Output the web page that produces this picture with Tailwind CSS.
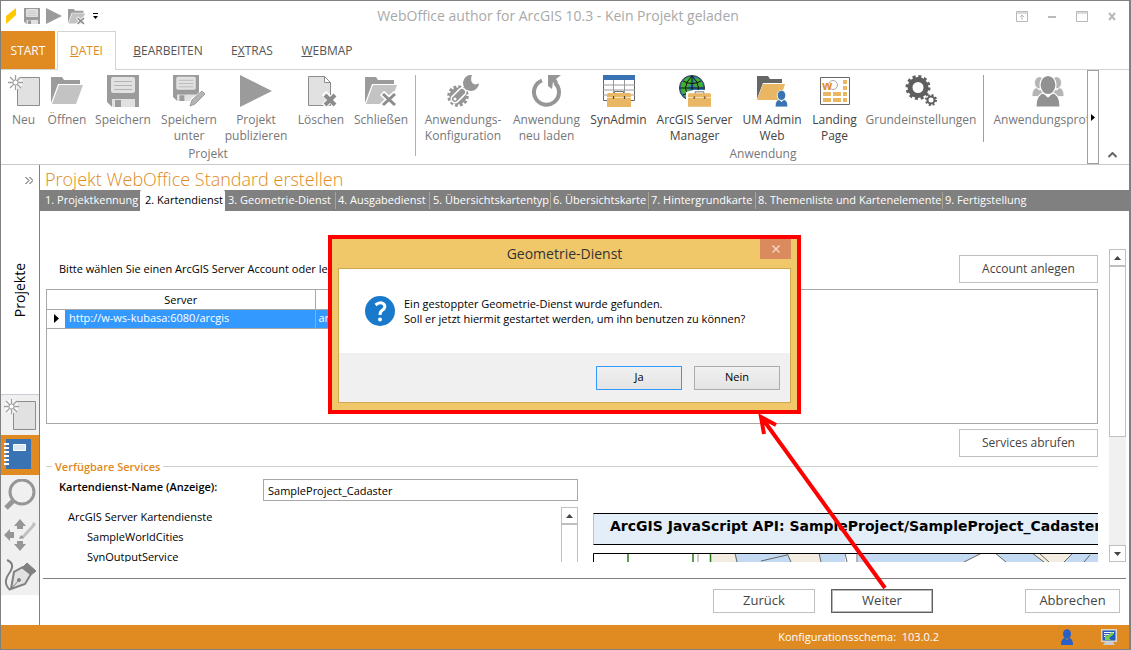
<!DOCTYPE html>
<html lang="de">
    <head>
        <meta charset="UTF-8">
        <meta name="viewport" content="width=device-width, initial-scale=1">
        <title>WebOffice author for ArcGIS 10.3</title>
        <script src="https://cdn.jsdelivr.net/npm/@tailwindcss/browser@4"></script>
    </head>
    <body class="relative h-screen flex flex-col overflow-hidden bg-white border border-r-2 border-[#808080] font-['Open_Sans','Noto_Sans',sans-serif] text-[11px] text-black">
        <!-- shared icons -->
        <svg class="hidden">
            <symbol id="i-new" viewBox="0 0 32 32">
                <path d="M9.500 2.500h22v28h-22z" fill="#e1e1e1" stroke="#8c8c8c"/>
                <circle cx="7.500" cy="7.500" r="7" fill="#fff" fill-opacity=".8"/>
                <path d="M7.500 0v15M0 7.500h15M2 2l11 11M13 2L2 13" stroke="#a0a0a0" stroke-width="1.300"/>
                <circle cx="7.500" cy="7.500" r="2.500" fill="#fff" stroke="#a0a0a0"/>
            </symbol>
            <symbol id="i-open" viewBox="0 0 32 32">
                <path d="M0 28V2h11l2 3h16v4H7z" fill="#9b9b9b"/>
                <path d="M8 10h24l-7 19H1z" fill="#c3c3c3"/>
            </symbol>
            <symbol id="i-save" viewBox="0 0 32 32">
                <path d="M0 0h32v32H5l-5-5z" fill="#9b9b9b"/>
                <rect x="4" y="2" width="24" height="16" rx="2" fill="#e1e1e1"/>
                <path d="M7 6.500h18M7 10.500h18M7 14.500h18" stroke="#b4b4b4"/>
                <path d="M5 24h23v8H5z" fill="#e1e1e1"/>
                <path d="M8 25h6v7H8z" fill="#9b9b9b"/>
            </symbol>
            <symbol id="i-play" viewBox="0 0 32 32">
                <path d="M0 0l32 16L0 32z" fill="#9b9b9b"/>
            </symbol>
            <symbol id="i-close" viewBox="0 0 32 32">
                <path d="M0 28V2h11l2 3h16v4H7z" fill="#9b9b9b"/>
                <path d="M8 10h24l-7 19H1z" fill="#c3c3c3"/>
                <path d="M17 18l14 13M31 18L17 31" stroke="#fff" stroke-width="6"/>
                <path d="M18 19l12 11M30 19L18 30" stroke="#8c8c8c" stroke-width="3"/>
            </symbol>
            <symbol id="i-user" viewBox="0 0 12 16">
                <path d="M0 16c0-5 2-7 4-7l2 2 2-2c2 0 4 2 4 7z"/>
                <ellipse cx="6" cy="5" rx="4" ry="4.800"/>
            </symbol>
            <symbol id="i-case" viewBox="0 0 24 16">
                <path d="M7.500 3V.500h9V3" fill="none" stroke="#707070"/>
                <path d="M1 2h22l1 1v13H0V3z" fill="#e9b664"/>
                <path d="M0 6.500h5M8 6.500h8M19 6.500h5" stroke="#fbe6c0"/>
                <path d="M6 5h1v3H6zM17 5h1v3h-1z" fill="#554830"/>
            </symbol>
        </svg>

        <!-- title bar -->
        <header class="flex h-[30px] shrink-0 items-center px-[5px]">
            <div class="flex w-[94px] items-center gap-[6px]">
                <svg class="size-4" viewBox="0 0 16 16"><path d="M0 8l10-8v7L0 16z" fill="#ffc800"/></svg>
                <button aria-label="Speichern" class="-ml-1 block"><svg class="size-4"><use href="#i-save"/></svg></button>
                <button aria-label="Publizieren" class="block"><svg class="size-4"><use href="#i-play"/></svg></button>
                <button aria-label="Schließen" class="block"><svg class="size-[17px]"><use href="#i-close"/></svg></button>
                <button aria-label="Mehr" class="ml-[2px] block"><svg class="h-[6px] w-[5px]" viewBox="0 0 5 6"><path d="M0 0h5v1H0zM0 3h5L2.500 6z"/></svg></button>
            </div>
            <h1 class="flex-1 text-center text-sm text-[#a9a9a9]">WebOffice author for ArcGIS 10.3 - Kein Projekt geladen</h1>
            <div class="flex items-center gap-[18px] pr-[6px]">
                <button aria-label="Menüband"><svg class="h-[11px] w-3" viewBox="0 0 12 11" fill="none" stroke="#b9b9b9"><path d="M.5.5h11v10H.5zM0 2h12M6 9V4M4 6l2-2 2 2"/></svg></button>
                <button aria-label="Minimieren"><svg class="h-[11px] w-3" viewBox="0 0 12 11"><path d="M2 5h8v2H2z" fill="#b9b9b9"/></svg></button>
                <button aria-label="Maximieren"><svg class="h-[11px] w-3" viewBox="0 0 12 11" fill="none" stroke="#b9b9b9"><path d="M.5.5h11v10H.5zM0 2h12"/></svg></button>
                <button aria-label="Fenster schließen"><svg class="h-[11px] w-3" viewBox="0 0 12 11"><path d="M3 2l6 7M9 2L3 9" stroke="#b9b9b9" stroke-width="2"/></svg></button>
            </div>
        </header>

        <!-- ribbon tabs -->
        <nav class="flex h-[39px] shrink-0 border-b border-[#d4d4d4] text-xs text-[#555]">
            <button class="w-[54px] bg-[#e08a22] pt-px text-white">START</button>
            <button class="-mb-px ml-[2px] w-[59px] border border-b-0 border-[#d4d4d4] bg-white text-[#e08a22]"><u>D</u>ATEI</button>
            <button class="ml-[2px] w-[100px] pt-px"><u>B</u>EARBEITEN</button>
            <button class="w-[68px] pt-px">E<u>X</u>TRAS</button>
            <button class="w-[82px] pt-px"><u>W</u>EBMAP</button>
        </nav>

        <!-- ribbon -->
        <div class="flex h-[95px] shrink-0 border-b border-[#c8c8c8] text-xs leading-4 text-[#777]">
            <div class="flex min-w-0 flex-1 overflow-hidden">
                <section class="flex w-[414px] shrink-0 flex-col justify-between">
                    <div class="flex items-start whitespace-nowrap pt-[5px] pl-px">
                        <button class="flex w-[43px] shrink-0 flex-col items-center gap-[5px]"><svg class="size-8"><use href="#i-new"/></svg>Neu</button>
                        <button class="flex w-[44px] shrink-0 flex-col items-center gap-[5px]"><svg class="size-8"><use href="#i-open"/></svg>Öffnen</button>
                        <button class="flex w-[68px] shrink-0 flex-col items-center gap-[5px]"><svg class="size-8"><use href="#i-save"/></svg>Speichern</button>
                        <button class="flex w-[64px] shrink-0 flex-col items-center gap-[5px]">
                            <svg class="size-8" viewBox="0 0 32 32"><use href="#i-save" width="26" height="26"/><path d="M15 32l3-8 11-9 4 4-11 11z" fill="#fff"/><path d="M17 31l2-6 10-9 3 3-10 10z" fill="#b4b4b4" stroke="#9b9b9b"/></svg>
                            <span>Speichern<br>unter</span>
                        </button>
                        <button class="flex w-[70px] shrink-0 flex-col items-center gap-[5px]"><svg class="size-8"><use href="#i-play"/></svg><span>Projekt<br>publizieren</span></button>
                        <button class="flex w-[60px] shrink-0 flex-col items-center gap-[5px]">
                            <svg class="size-8" viewBox="0 0 32 32"><path d="M3.500 1.500h16l6 6v23h-22z" fill="#e1e1e1" stroke="#8c8c8c"/><path d="M19.500 1.500v6h6z" fill="#fff" stroke="#8c8c8c"/><path d="M19 18l13 13M32 18L19 31" stroke="#fff" stroke-width="6"/><path d="M20 20l10 10M30 20L20 30" stroke="#8c8c8c" stroke-width="4"/></svg>
                            Löschen
                        </button>
                        <button class="flex w-[60px] shrink-0 flex-col items-center gap-[5px]"><svg class="size-8"><use href="#i-close"/></svg>Schließen</button>
                    </div>
                    <h2 class="pb-[2px] text-center">Projekt</h2>
                </section>
                <section class="flex w-[696px] shrink-0 flex-col justify-between">
                    <div class="flex items-start whitespace-nowrap pt-[5px]">
                        <div class="-mb-4 h-[81px] w-[6px] shrink-0 border-l border-[#a5b3c8]"></div>
                        <button class="flex w-[84px] flex-col items-center gap-[5px]">
                            <svg class="size-8" viewBox="0 0 32 32"><circle cx="11" cy="21" r="8.500" fill="#969696"/><circle cx="11" cy="21" r="9" fill="none" stroke="#969696" stroke-width="3.500" stroke-dasharray="2.830 1.880"/><path d="M14 18l9-9" stroke="#969696" stroke-width="3"/><path d="M8 24l7-7" stroke="#fff" stroke-width="9" stroke-linecap="round"/><path d="M8 24l7-7" stroke="#969696" stroke-width="6" stroke-linecap="round"/><circle cx="8" cy="24" r="1.500" fill="#fff"/><path d="M25 0a8 8 0 1 0 7 8c-5 4-10-1-7-8z" fill="#969696"/></svg>
                            <span>Anwendungs-<br>Konfiguration</span>
                        </button>
                        <button class="flex w-[83px] flex-col items-center gap-[5px]">
                            <svg class="size-8" viewBox="0 0 32 32"><path d="M24 8a12.500 12.500 0 1 1-13-2.500" fill="none" stroke="#969696" stroke-width="4"/><path d="M17 0h13l-5 4 2 3-3 3-2-3-1 7-4-3z" fill="#969696"/></svg>
                            <span>Anwendung<br>neu laden</span>
                        </button>
                        <button class="flex w-[61px] flex-col items-center gap-[5px] text-[#444]">
                            <svg class="size-8" viewBox="0 0 32 32"><path d="M.5 4.500h31v21H.5z" fill="#fff" stroke="#666"/><path d="M0 0h32v5H0z" fill="#3973b4"/><path d="M0 10h32M0 15h32M0 20h32M10.500 5v20M21.500 5v20" stroke="#999"/><use href="#i-case" x="4" y="16" width="24" height="16"/></svg>
                            SynAdmin
                        </button>
                        <button class="flex w-[91px] flex-col items-center gap-[5px] text-[#444]">
                            <svg class="size-8" viewBox="0 0 32 32"><circle cx="13" cy="13" r="12.500" fill="#2d7fc4" stroke="#333"/><path d="M3 8c3-6 9-7 11-5l-1 6-4 3 2 6-4 4c-4-3-6-8-4-14zM16 3c5 0 8 5 8 8l-6 3-3-4z" fill="#44b030"/><path d="M13 1v24M1 13h24M4 6q9 5 18 0M4 20q9-5 18 0M13 1q-13 12 0 24M13 1q13 12 0 24" fill="none" stroke="#111"/><path d="M7 17l7-2h12l6 2v15H7z" fill="#fff"/><use href="#i-case" x="9" y="16" width="23" height="16"/></svg>
                            <span>ArcGIS Server<br>Manager</span>
                        </button>
                        <button class="flex w-[64px] flex-col items-center gap-[5px] text-[#444]">
                            <svg class="size-8" viewBox="0 0 32 32"><path d="M1 24V1h11l2 3h12v4H7z" fill="#666"/><path d="M7 9h22l-5 16H1z" fill="#e9b664"/><use href="#i-user" x="19" y="15" width="13" height="17" fill="#3973b4" stroke="#fff" stroke-width=".8"/></svg>
                            <span>UM Admin<br>Web</span>
                        </button>
                        <button class="flex w-[61px] flex-col items-center gap-[5px] text-[#444]">
                            <svg class="size-8" viewBox="0 0 32 32"><path d="M1.500 2.500h29v27h-29z" fill="#fff" stroke="#666"/><circle cx="14" cy="10" r="4.500" fill="none" stroke="#aaa"/><text x="3" y="15" font-size="12" font-weight="700" fill="#e09030">w</text><path d="M24 5h4v4h-4zM24 11h4v4h-4zM4 17h8v4H4zM14 17h8v4h-8zM24 17h4v4h-4zM4 23h8v4H4zM14 23h8v4h-8zM24 23h4v4h-4z" fill="#e9b664"/></svg>
                            <span>Landing<br>Page</span>
                        </button>
                        <button class="flex w-[112px] flex-col items-center gap-[5px]">
                            <svg class="size-8" viewBox="0 0 32 32" fill="none" stroke="#5f5f5f"><circle cx="13" cy="12.500" r="8" stroke-width="5"/><circle cx="13" cy="12.500" r="11" stroke-width="3" stroke-dasharray="3 2.760"/><circle cx="26" cy="25" r="3.500" stroke-width="2"/><circle cx="26" cy="25" r="5" stroke-width="2" stroke-dasharray="2 1.930"/></svg>
                            Grundeinstellungen
                        </button>
                        <div class="ml-[6px] h-[67px] w-[6px] shrink-0 border-l border-[#a0a0a0]"></div>
                        <button class="flex w-[118px] flex-col items-center gap-[5px]">
                            <svg class="size-8" viewBox="0 0 32 32" stroke="#fff" stroke-width=".6"><g fill="#b4b4b4"><use href="#i-user" x="0" y="1" width="15" height="21"/><use href="#i-user" x="17" y="1" width="15" height="21"/></g><use href="#i-user" x="4" y="0" width="24" height="32" fill="#919191"/></svg>
                            Anwendungsprofile
                        </button>
                    </div>
                    <h2 class="pb-[2px] text-center">Anwendung</h2>
                </section>
            </div>
            <button aria-label="Weiter blättern" class="flex w-3 shrink-0 justify-center border border-[#a0a0a0] pt-[43px]"><svg class="h-[7px] w-1" viewBox="0 0 4 7"><path d="M0 0l4 3.500L0 7z"/></svg></button>
            <button aria-label="Menüband reduzieren" class="flex w-[30px] shrink-0 items-end justify-center pr-1 pb-[6px]"><svg class="h-[6px] w-[9px]" viewBox="0 0 9 6"><path d="M.5 5L4.500 1l4 4" fill="none" stroke="#666" stroke-width="2"/></svg></button>
        </div>

        <div class="flex min-h-0 flex-1">
            <!-- left panel -->
            <aside class="flex w-[39px] shrink-0 flex-col items-center border-r border-[#808080] pb-[30px]">
                <button aria-label="Aufklappen" class="mt-3 mr-[6px] self-end"><svg class="h-[7px] w-2" viewBox="0 0 8 7"><path d="M.5 0L4 3.500.5 7M4.500 0L8 3.500 4.500 7" fill="none" stroke="#444"/></svg></button>
                <span class="mt-[79px] rotate-180 text-sm leading-5 [writing-mode:vertical-rl]">Projekte</span>
                <div class="mt-auto flex w-full flex-col border-t border-[#ccccd8] bg-[#f0f0f0]">
                    <button aria-label="Neu" class="flex h-10 items-center justify-center"><svg class="size-8"><use href="#i-new"/></svg></button>
                    <button aria-label="Projekt" class="flex h-10 items-center justify-center bg-[#e08a22]">
                        <svg class="size-8" viewBox="0 0 32 32"><path d="M2 0h25v30H2z" fill="#3973b4"/><path d="M9.500 5.500h12v6h-12z" fill="#dce6f0" stroke="#fff"/><path d="M2.500 4v23" stroke="#fff" stroke-width="5" stroke-dasharray="2 2"/></svg>
                    </button>
                    <button aria-label="Suchen" class="flex h-10 items-center justify-center">
                        <svg class="size-8" viewBox="0 0 32 32" fill="none" stroke="#969696"><circle cx="18" cy="13" r="12" stroke-width="3"/><path d="M9 22l-7 7" stroke-width="5"/></svg>
                    </button>
                    <button aria-label="Bearbeiten" class="flex h-10 items-center justify-center">
                        <svg class="size-8" viewBox="0 0 32 32" fill="#969696"><path d="M16 0l6 7h-3v3h-6V7h-3zM16 32l6-7h-3v-3h-6v3h-3zM0 16l6-6v3h4v6H6v3z"/><path d="M17 18l11-12 1-3 3 2-2 3-11 12z" fill="#c0c0c0"/><path d="M15 20l2-4 3 3z"/></svg>
                    </button>
                    <button aria-label="Zeichnen" class="flex h-10 items-center justify-center">
                        <svg class="size-8" viewBox="0 0 32 32" fill="none" stroke="#808080"><path d="M3 1c5 2 7 6 3 12-5 7-6 12 0 18" stroke-width="2"/><path d="M7 30l3-17 9-5 8 7-6 10z" fill="#e1e1e1" stroke-width="2"/><path d="M7 30l8-9"/><circle cx="15" cy="21" r="1.500" fill="#808080"/><path d="M23 4l9 8-5 4-9-7z" fill="#808080"/></svg>
                    </button>
                </div>
            </aside>

            <main class="flex min-w-0 flex-1 flex-col">
                <h2 class="h-[25px] shrink-0 pl-[5px] text-lg leading-[28px] font-light text-[#e08a22]">Projekt WebOffice Standard erstellen</h2>
                <ol class="flex h-[21px] shrink-0 items-center whitespace-nowrap bg-[#808080] text-white">
                    <li class="w-[100px] pl-[5px]">1. Projektkennung</li>
                    <li class="flex h-full w-[85px] items-center rounded-t-xs bg-white pl-[5px] text-black">2. Kartendienst</li>
                    <li class="w-[110px] pl-[3px]">3. Geometrie-Dienst</li>
                    <li class="w-[94px] border-l border-[#a8a490] pl-[2px]">4. Ausgabedienst</li>
                    <li class="w-[121px] border-l border-[#a8a490] pl-[3px]">5. Übersichtskartentyp</li>
                    <li class="w-[98px] border-l border-[#a8a490] pl-[2px]">6. Übersichtskarte</li>
                    <li class="w-[107px] border-l border-[#a8a490] pl-[2px]">7. Hintergrundkarte</li>
                    <li class="w-[187px] border-l border-[#a8a490] pl-[2px]">8. Themenliste und Kartenelemente</li>
                    <li class="border-l border-[#a8a490] pl-[2px]">9. Fertigstellung</li>
                </ol>

                <div class="flex min-h-0 flex-1 overflow-hidden">
                    <div class="flex min-w-0 flex-1 flex-col pl-[6px] pr-[11px]">
                        <div class="mt-11 flex shrink-0 items-center justify-between pl-[13px]">
                            <p>Bitte wählen Sie einen ArcGIS Server Account oder legen Sie einen neuen an.</p>
                            <button class="h-7 w-[139px] border border-[#c0c0c0] text-xs text-[#444]">Account anlegen</button>
                        </div>
                        <div class="mt-[6px] h-[135px] shrink-0 border border-[#a8a8a8]">
                            <table class="w-[540px] table-fixed border-collapse">
                                <colgroup><col class="w-[18px]"><col class="w-[250px]"><col></colgroup>
                                <thead>
                                    <tr class="h-[18px] border-b border-[#a8a8a8]">
                                        <th colspan="2" class="border-r border-[#a8a8a8] p-0 pt-[2px] font-normal">Server</th>
                                        <th class="p-0 font-normal"></th>
                                    </tr>
                                </thead>
                                <tbody>
                                    <tr class="h-[19px] border-b border-[#a8a8a8] bg-[#3399ff] text-white">
                                        <td class="bg-white p-0"><svg class="mx-auto h-[9px] w-[5px]" viewBox="0 0 5 9"><path d="M0 0l5 4.500L0 9z"/></svg></td>
                                        <td class="border-r border-[#a8a8a8] p-0 pl-1">http://w-ws-kubasa:6080/arcgis</td>
                                        <td class="p-0 pl-[3px]">arcgis</td>
                                    </tr>
                                </tbody>
                            </table>
                        </div>
                        <div class="mt-[5px] flex shrink-0 justify-end">
                            <button class="h-7 w-[139px] border border-[#c0c0c0] text-xs text-[#444]">Services abrufen</button>
                        </div>
                        <fieldset class="min-w-0 border-t border-[#d0d0d0]">
                            <legend class="ml-[6px] px-[3px] leading-[19px] font-semibold text-[#e08a22]">Verfügbare Services</legend>
                            <div class="flex gap-[15px]">
                                <div class="w-[532px] shrink-0 pl-[13px]">
                                    <div class="flex items-start pt-[3px]">
                                        <label for="dienst" class="w-[204px] leading-[15px] font-semibold">Kartendienst-Name (Anzeige):</label>
                                        <input id="dienst" value="SampleProject_Cadaster" class="h-[22px] min-w-0 flex-1 border border-[#a8a8a8] px-1 outline-none">
                                    </div>
                                    <div class="mt-[6px] flex h-[55px] justify-between overflow-hidden leading-5">
                                        <ul class="pl-[9px]">
                                            <li>ArcGIS Server Kartendienste
                                                <ul class="pl-[19px]">
                                                    <li>SampleWorldCities</li>
                                                    <li>SynOutputService</li>
                                                </ul>
                                            </li>
                                        </ul>
                                        <div class="w-[17px] border-x border-t border-[#c0c0c0]">
                                            <button aria-label="Nach oben" class="flex h-[17px] w-full items-center justify-center border-b-2 border-[#c0c0c0]"><svg class="h-1 w-[7px]" viewBox="0 0 7 4"><path d="M0 4l3.500-4L7 4z" fill="#444"/></svg></button>
                                        </div>
                                    </div>
                                </div>
                                <div class="mt-[37px] h-[49px] min-w-0 flex-1 overflow-hidden">
                                    <div class="flex h-8 items-center overflow-hidden border-y border-l border-y-black border-l-[#c0c0c0] bg-[#e4eef8] pl-4">
                                        <h3 class="whitespace-nowrap pb-[6px] font-['DejaVu_Sans',sans-serif] text-sm font-bold">ArcGIS JavaScript API: SampleProject/SampleProject_Cadaster</h3>
                                    </div>
                                    <svg class="mt-2 h-[9px] w-full" viewBox="0 0 505 9" preserveAspectRatio="xMinYMin slice">
                                        <path d="M117 0h388v9H117z" fill="#f2ede0"/>
                                        <path d="M142 0h52l4 9h-55zM226 0h26l2 9h-26zM265 0h124l-18 9H265zM402 0h37l12 9h-38zM480 0h25v9h-34z" fill="#c4daf2"/>
                                        <path d="M252 0h13v9h-13zM389 0h13l11 9h-42z" fill="#fff"/>
                                        <path d="M142 0l2 9M194 0l4 9M226 0l2 9M252 0l2 9M264 0v9M389 0l-18 9M402 0l11 9M439 0l12 9M480 0l-9 9M168 8l26-6M446 0l10 9M497 2l-6 7" fill="none" stroke="#666"/>
                                        <path d="M35 0v9M100 0v9M117.500 0v9" stroke="#287818" stroke-width="1.500"/>
                                        <path d="M105 0v9" stroke="#999"/>
                                        <path d="M.5 9V.5H505" fill="none" stroke="#000"/>
                                    </svg>
                                </div>
                            </div>
                        </fieldset>
                    </div>
                    <div class="mr-[3px] mt-[38px] flex w-[17px] shrink-0 flex-col bg-[#f0f0f0]">
                        <button aria-label="Nach oben" class="flex h-[17px] shrink-0 items-center justify-center border border-[#c0c0c0] bg-white"><svg class="h-1 w-[7px]" viewBox="0 0 7 4"><path d="M0 4l3.500-4L7 4z" fill="#444"/></svg></button>
                        <div class="h-[171px] border border-[#c0c0c0] bg-white"></div>
                        <button aria-label="Nach unten" class="mt-auto flex h-[17px] shrink-0 items-center justify-center border border-[#c0c0c0] bg-white"><svg class="h-1 w-[7px]" viewBox="0 0 7 4"><path d="M0 0l3.500 4L7 0z" fill="#444"/></svg></button>
                    </div>
                </div>

                <footer class="mx-[3px] mt-4 flex h-[47px] shrink-0 border-t border-[#808080] pr-[6px] pt-[10px] text-[13px] text-[#444]">
                    <button class="ml-auto h-6 w-[102px] border border-[#c0c0c0]">Zurück</button>
                    <button class="ml-4 h-6 w-[102px] border border-[#606060] inset-ring inset-ring-[#b8b8b8]">Weiter</button>
                    <button class="ml-[92px] h-6 w-[95px] border border-[#c0c0c0]">Abbrechen</button>
                </footer>
            </main>
        </div>

        <!-- status bar -->
        <div class="flex h-6 shrink-0 items-center justify-end bg-[#e08a22] pr-3 text-white">
            <span class="mr-[122px] whitespace-pre">Konfigurationsschema:  103.0.2</span>
            <svg class="mr-[28px] h-4 w-3" fill="#2860c8"><use href="#i-user"/></svg>
            <svg class="size-4" viewBox="0 0 16 16"><path d="M0 0h16v13H0z" fill="#d8d8c8"/><path d="M1.500 1.500h13v10h-13z" fill="#2858c0"/><path d="M3 3.500h10M3 5.500h5M3 7.500h3" stroke="#fff"/><path d="M4 11V5l2 2 5-4 2 2-5 4 2 2z" fill="#70d050"/><path d="M4 13h8l2 3H2z" fill="#ccc"/></svg>
        </div>

        <!-- message box -->
        <div class="absolute inset-0 flex items-center justify-center pr-px pb-px">
            <div role="dialog" aria-labelledby="dlg-title" class="relative w-[473px] border-4 border-[#ff0000] bg-[#f0c869] px-[6px] pb-[7px]">
                <div class="relative flex h-[29px] items-center justify-center">
                    <h2 id="dlg-title" class="text-sm text-[#333]">Geometrie-Dienst</h2>
                    <button aria-label="Schließen" class="absolute right-0 top-0 flex h-5 w-[31px] items-center justify-center bg-[#db8a5e]"><svg class="size-2" viewBox="0 0 8 8"><path d="M.5.5l7 7M7.500.5l-7 7" stroke="#f4dcc8" stroke-width="1.300"/></svg></button>
                </div>
                <div class="border border-[#d0a850]">
                    <div class="flex h-[84px] items-center gap-[9px] bg-white pl-[26px]">
                        <svg class="size-[30px]" viewBox="0 0 30 30"><circle cx="15" cy="15" r="15" fill="#1979ca"/><path d="M10.500 9q4-3.500 7.500-1.500c3 2 2 5-.5 6.500-2 1.300-2.500 2-2.500 5" fill="none" stroke="#fff" stroke-width="3"/><circle cx="15" cy="23.500" r="2" fill="#fff"/></svg>
                        <p class="leading-[15px]">Ein gestoppter Geometrie-Dienst wurde gefunden.<br>Soll er jetzt hiermit gestartet werden, um ihn benutzen zu können?</p>
                    </div>
                    <div class="flex h-[49px] items-center justify-end gap-3 bg-[#f0f0f0] pr-[10px]">
                        <button class="h-6 w-[86px] border border-[#3399ff] bg-linear-to-b from-[#f0f0f0] to-[#e4e4e4]">Ja</button>
                        <button class="h-6 w-[86px] border border-[#acacac] bg-linear-to-b from-[#f0f0f0] to-[#e4e4e4]">Nein</button>
                    </div>
                </div>
                <!-- pointer from the Weiter button -->
                <svg class="pointer-events-none absolute left-[425px] top-full h-[180px] w-[134px]" viewBox="0 0 134 180" fill="none" stroke="#ff0000" stroke-width="4"><path d="M128 178L5 8M7 24L4 7l15 8"/></svg>
            </div>
        </div>
    </body>
</html>
